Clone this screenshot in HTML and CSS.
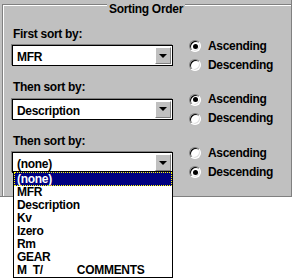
FILE: index.html
```html
<!DOCTYPE html>
<html lang="en">
<head>
    <meta charset="UTF-8">
    <title>Sorting Order</title>
    <link rel="stylesheet" href="styles.css">
</head>
<body>

    <div class="dialog">
        <div class="group">
            <div class="group__title"><span>Sorting Order</span></div>

            <div class="sort">
                <div class="sort__label">First sort by:</div>
                <div class="combo">
                    <span class="combo__value">MFR</span>
                    <span class="combo__btn"><span class="arrow"></span></span>
                </div>
                <div class="radios">
                    <div class="radio"><span class="radio__dot radio__dot--on"></span>Ascending</div>
                    <div class="radio"><span class="radio__dot"></span>Descending</div>
                </div>
            </div>

            <div class="sort">
                <div class="sort__label">Then sort by:</div>
                <div class="combo">
                    <span class="combo__value">Description</span>
                    <span class="combo__btn"><span class="arrow"></span></span>
                </div>
                <div class="radios">
                    <div class="radio"><span class="radio__dot radio__dot--on"></span>Ascending</div>
                    <div class="radio"><span class="radio__dot"></span>Descending</div>
                </div>
            </div>

            <div class="sort">
                <div class="sort__label">Then sort by:</div>
                <div class="combo combo--open">
                    <span class="combo__value">(none)</span>
                    <span class="combo__btn"><span class="arrow"></span></span>

                    <ul class="list">
                        <li class="list__item list__item--selected">(none)</li>
                        <li class="list__item">MFR</li>
                        <li class="list__item">Description</li>
                        <li class="list__item">Kv</li>
                        <li class="list__item">Izero</li>
                        <li class="list__item">Rm</li>
                        <li class="list__item">GEAR</li>
                        <li class="list__item">M  T/<span class="list__gap">COMMENTS</span></li>
                    </ul>
                </div>
                <div class="radios">
                    <div class="radio"><span class="radio__dot"></span>Ascending</div>
                    <div class="radio"><span class="radio__dot radio__dot--on"></span>Descending</div>
                </div>
            </div>
        </div>
    </div>

</body>
</html>
```

FILE: styles.css
```css
/* classic 3D dialog colours */
:root {
    --face: #c0c0c0;
    --shadow: #808080;
    --light: #ffffff;
    --dark: #000000;
    --select: #000080;
    --font: "Liberation Sans", Arial, sans-serif;
}

*,
*::before,
*::after {
    box-sizing: border-box;
}

html,
body {
    height: 100%;
}

body {
    margin: 0;
    min-height: 278px;
    background: #ffffff;
    font-family: var(--font);
    font-size: 12px;
    font-weight: bold;
    letter-spacing: -0.3px;
    color: var(--dark);
}

ul { list-style: none; margin: 0; padding: 0; }

/* ---------- dialog + group box ---------- */
.dialog {
    width: 292px;
    height: 197px;
    padding: 4px 0 0 2px;
    background: var(--face);
    border-right: 1px solid var(--shadow);
    border-bottom: 1px solid var(--shadow);
}

.group {
    position: relative;
    height: 100%;
    padding: 22.5px 0 0 9px;
    border-top: 1px solid var(--shadow);
    border-left: 1px solid var(--shadow);
    box-shadow: inset 1px 1px 0 var(--light);
}

.group__title {
    position: absolute;
    top: -2px;
    left: -2px;
    right: 0;
    text-align: center;
    line-height: 13px;
}

.group__title span {
    padding: 0 2px;
    background: var(--face);
}

/* ---------- one sort row ---------- */
.sort {
    display: grid;
    grid-template-columns: 161px auto;
    grid-template-rows: 13px 21px;
    row-gap: 4.5px;
    column-gap: 16px;
    height: 53.5px;
}

.sort__label {
    grid-column: 1;
    grid-row: 1;
    line-height: 13px;
    padding-left: 1px;
}

/* ---------- combo box ---------- */
.combo {
    position: relative;
    grid-column: 1;
    grid-row: 2;
    display: flex;
    align-items: stretch;
    background: var(--light);
    border: 1px solid var(--dark);
    box-shadow: -1px -1px 0 var(--shadow);
    padding: 1px 1px 0 0;
}

.combo__value {
    flex: 1;
    padding-left: 4px;
    line-height: 18px;
    padding-top: 1px;
}

.combo__btn {
    display: flex;
    align-items: center;
    justify-content: center;
    width: 16px;
    margin-bottom: 1px;
    background: var(--face);
    border: 1px solid;
    border-color: var(--light) var(--shadow) var(--shadow) var(--light);
}

.arrow {
    width: 0;
    height: 0;
    border-left: 4px solid transparent;
    border-right: 4px solid transparent;
    border-top: 4px solid var(--dark);
}

/* ---------- radio buttons ---------- */
.radios {
    grid-column: 2;
    grid-row: 2;
    align-self: center;
    display: flex;
    flex-direction: column;
    gap: 6px;
}

.radio {
    display: flex;
    align-items: center;
    gap: 7px;
    height: 13px;
    line-height: 13px;
}

.radio__dot {
    position: relative;
    width: 12px;
    height: 12px;
    border-radius: 50%;
    background: var(--light);
    border: 1px solid;
    border-color: var(--shadow) var(--light) var(--light) var(--shadow);
    box-shadow: inset 1px 1px 0 var(--dark), inset -1px -1px 0 #dfdfdf;
}

.radio__dot--on::after {
    content: "";
    position: absolute;
    top: 2.5px;
    left: 2.5px;
    width: 5px;
    height: 5px;
    border-radius: 50%;
    background: var(--dark);
}

/* ---------- open drop-down list ---------- */
.list {
    position: absolute;
    top: 18px;
    left: 0;
    width: 160px;
    z-index: 10;
    background: var(--light);
    border: 1px solid var(--dark);
}

.list__item {
    height: 13px;
    line-height: 13px;
    padding-left: 3px;
    white-space: pre;
}

.list__item--selected {
    height: 14px;
    line-height: 14px;
    background: var(--select);
    color: var(--light);
    outline: 1px dotted #ffff00;
    outline-offset: -1px;
}

.list__gap {
    margin-left: 34px;
}
```
